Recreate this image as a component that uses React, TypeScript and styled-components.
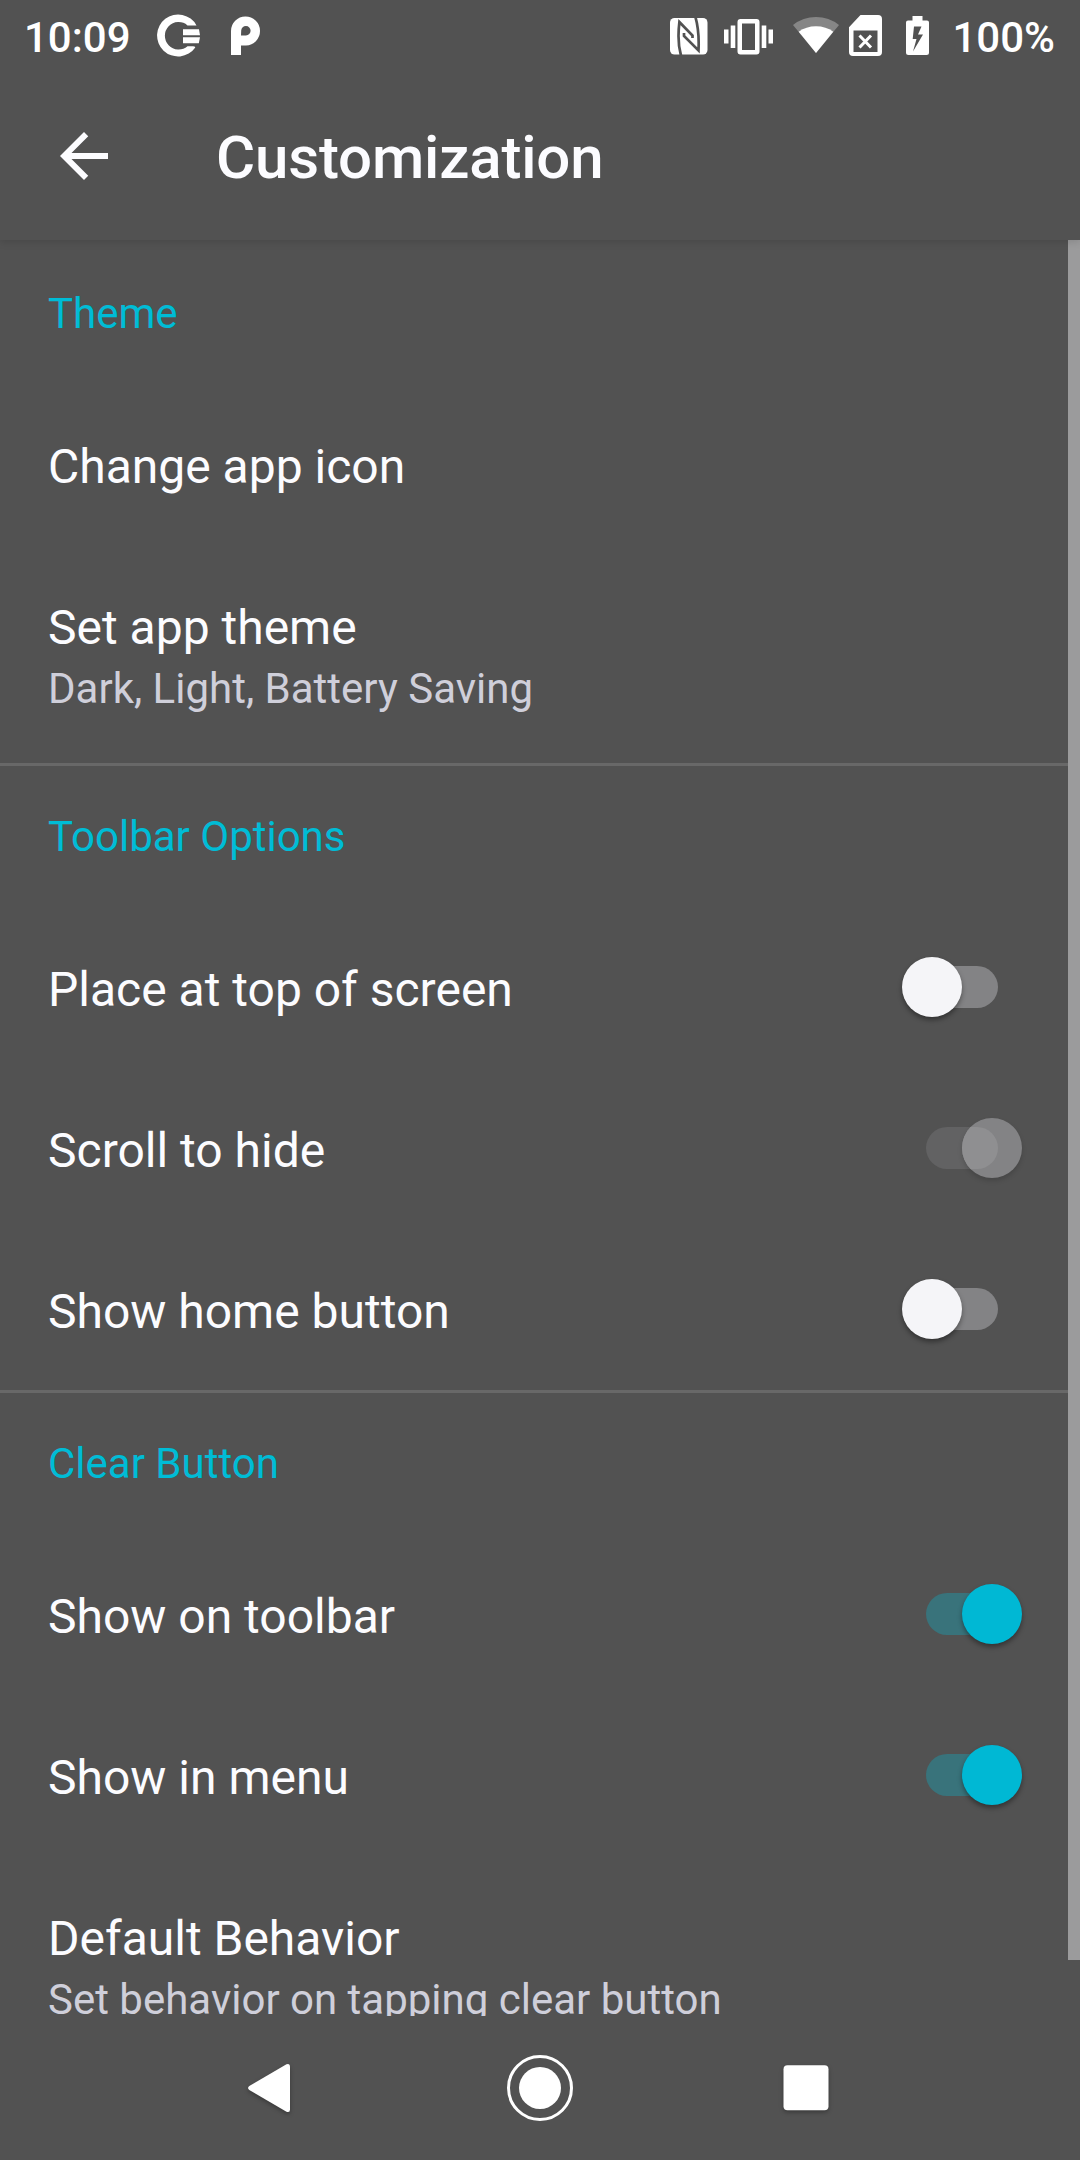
import React from "react";
import styled, { createGlobalStyle, css } from "styled-components";

const Global = createGlobalStyle`
  * { box-sizing: border-box; }
  html, body { margin: 0; padding: 0; background: #525252; }
`;

const Screen = styled.div`
  display: flex;
  flex-direction: column;
  width: 1080px;
  height: 2160px;
  overflow: hidden;
  background: #525252;
  color: #fcfcff;
  font-family: Roboto, "Noto Sans", sans-serif;
`;

const StatusBar = styled.header`
  display: flex;
  align-items: center;
  justify-content: space-between;
  flex: none;
  height: 72px;
  padding: 0 25px 0 24px;
  color: #fff;
`;

const StatusGroup = styled.div`
  display: flex;
  align-items: center;
  height: 72px;
`;

const StatusText = styled.span`
  font-size: 42px;
  font-weight: 500;
  line-height: 72px;
  white-space: nowrap;
  padding-top: 4px;
`;

const StatusIcon = styled.svg<{ $gap: number }>`
  display: block;
  flex: none;
  margin-left: ${(p) => p.$gap}px;
`;

const Toolbar = styled.div`
  display: flex;
  align-items: center;
  flex: none;
  height: 168px;
  padding-left: 48px;
  position: relative;
  z-index: 1;
  background: #525252;
  box-shadow: 0 2px 8px rgba(0, 0, 0, 0.13);
  clip-path: inset(0 0 -20px 0);
`;

const BackButton = styled.button`
  display: flex;
  width: 72px;
  height: 72px;
  padding: 0;
  border: 0;
  background: none;
  color: inherit;
`;

const PageTitle = styled.h1`
  margin: 0 0 0 96px;
  font-size: 60px;
  font-weight: 500;
  line-height: 70px;
  letter-spacing: -0.16px;
  padding-top: 4px;
`;

const Content = styled.main`
  flex: none;
  height: 1776px;
  overflow: hidden;
  position: relative;
`;

const ScrollThumb = styled.div`
  position: absolute;
  top: 0;
  right: 0;
  width: 12px;
  height: 1720px;
  background: #9b9b9c;
`;

const Group = styled.section`
  & + & > h2 {
    border-top: 3px solid #686868;
    padding-top: 46px;
  }
`;

const GroupTitle = styled.h2`
  margin: 0;
  height: 144px;
  padding: 49px 48px 0;
  font-size: 42px;
  font-weight: 400;
  line-height: 49px;
  color: #00bcd6;
`;

const Row = styled.div<{ $tall?: boolean }>`
  display: flex;
  align-items: flex-start;
  justify-content: space-between;
  height: ${(p) => (p.$tall ? 218 : 161)}px;
  padding: 0 58px 0 48px;
`;

const RowText = styled.div`
  display: flex;
  flex-direction: column;
  padding-top: 54px;
`;

const RowTitle = styled.div`
  font-size: 48px;
  line-height: 57px;
  white-space: nowrap;
`;

const RowSummary = styled.div`
  margin-top: 7px;
  font-size: 42px;
  line-height: 51px;
  color: #cfcfda;
  white-space: nowrap;
`;

type SwitchState = "on" | "off" | "disabled";

const trackColor = { on: "#39737b", off: "#838385", disabled: "#626263" };
const thumbColor = { on: "#00b8d4", off: "#f5f5f8", disabled: "#838385" };

const Switch = styled.div<{ $state: SwitchState }>`
  display: flex;
  flex: none;
  align-items: center;
  width: 120px;
  height: 60px;
  margin-top: 50px;
  position: relative;
  justify-content: ${(p) => (p.$state === "off" ? "flex-start" : "flex-end")};

  &::before {
    content: "";
    position: absolute;
    left: 24px;
    top: 9px;
    width: 72px;
    height: 42px;
    border-radius: 21px;
    background: ${(p) => trackColor[p.$state]};
  }
`;

const Thumb = styled.span<{ $state: SwitchState }>`
  position: relative;
  width: 60px;
  height: 60px;
  border-radius: 50%;
  overflow: hidden;
  background: ${(p) => thumbColor[p.$state]};
  box-shadow: 0 3px 5px rgba(0, 0, 0, ${(p) => (p.$state === "disabled" ? 0.15 : 0.38)});

  ${(p) =>
    p.$state === "disabled" &&
    css`
      &::after {
        content: "";
        position: absolute;
        right: 24px;
        top: 9px;
        width: 72px;
        height: 42px;
        border-radius: 21px;
        background: #8f8f91;
      }
    `}
`;

const NavBar = styled.nav`
  display: flex;
  flex: none;
  align-items: center;
  justify-content: center;
  gap: 186px;
  height: 144px;
`;

const NavIcon = styled.svg`
  display: block;
  overflow: visible;
  filter: drop-shadow(0 2px 2px rgba(0, 0, 0, 0.3));
`;

const HomeIcon = styled(NavIcon)`
  filter: none;
`;

interface Item {
  title: string;
  summary?: string;
  state?: SwitchState;
}

const groups: { title: string; items: Item[] }[] = [
  {
    title: "Theme",
    items: [
      { title: "Change app icon" },
      { title: "Set app theme", summary: "Dark, Light, Battery Saving" },
    ],
  },
  {
    title: "Toolbar Options",
    items: [
      { title: "Place at top of screen", state: "off" },
      { title: "Scroll to hide", state: "disabled" },
      { title: "Show home button", state: "off" },
    ],
  },
  {
    title: "Clear Button",
    items: [
      { title: "Show on toolbar", state: "on" },
      { title: "Show in menu", state: "on" },
      { title: "Default Behavior", summary: "Set behavior on tapping clear button" },
    ],
  },
];

function NotificationIcons() {
  return (
    <>
      <StatusIcon $gap={26} width="44" height="44" viewBox="0 0 44 44">
        <path
          d="M39.5 11.400A21 21 0 1 0 38.300 33.500Q38 32.200 36 32.200H30.500A13.700 13.700 0 1 1 30.500 11.400z"
          fill="#fff"
        />
        <path d="M26 15.200H42L43 21.200H26zM26 23.200H43L41.800 29.200H26z" fill="#fff" />
      </StatusIcon>
      <StatusIcon $gap={29} width="31" height="40" viewBox="0 0 31 40">
        <path
          fill="#fff"
          fillRule="evenodd"
          d="M1 38.500V15A14.500 14.500 0 1 1 16 29.500H11V38.500Q11 39 10.500 39H1.500Q1 39 1 38.500zM11 19.500H16A4.700 4.700 0 1 0 11.200 14.600z"
        />
      </StatusIcon>
    </>
  );
}

function SystemIcons() {
  return (
    <>
      <StatusIcon $gap={0} width="38" height="38" viewBox="0 -1 38 38">
        <rect width="37.500" height="36.500" rx="4.500" fill="#fff" />
        <path
          d="M11 37.500Q7 24 9.400 4L22.500 17.500V20M25.300 -1.500Q29.500 13 28.500 32.500L14 18V15"
          fill="none"
          stroke="#525252"
          strokeWidth="2.700"
        />
      </StatusIcon>
      <StatusIcon $gap={16} width="49" height="38" viewBox="0 0 49 38">
        <path
          fill="#fff"
          fillRule="evenodd"
          d="M0 12.500H4.500V26.500H0zM6.700 8.500H11.300V31H6.700zM37.700 8.500H42.300V31H37.700zM44.500 12.500H49V26.500H44.500zM16.500 2H32.500Q35.500 2 35.500 5V34.500Q35.500 37.500 32.500 37.500H16.500Q13.500 37.500 13.500 34.500V5Q13.500 2 16.500 2zM18 6.500V33H31V6.500z"
        />
      </StatusIcon>
      <StatusIcon $gap={20} width="46" height="38" viewBox="0 1 46 38">
        <path d="M23 37L0 9Q10 1 23 1T46 9z" fill="#868686" />
        <path d="M23 37L5.700 15.800Q13 10.300 23 10.300T40.300 15.800z" fill="#fff" />
      </StatusIcon>
      <StatusIcon $gap={10} width="33" height="42" viewBox="0 0 33 42">
        <path
          fill="#fff"
          fillRule="evenodd"
          d="M11.500 0H29Q33 0 33 4V37Q33 41 29 41H4Q0 41 0 37V12.200zM4.500 15.500V37H28.500V15.500z"
        />
        <path d="M10.500 20.500L22 32.500M22 20.500L10.500 32.500" stroke="#fff" strokeWidth="3" />
      </StatusIcon>
      <StatusIcon $gap={24} width="23" height="40" viewBox="0 0 23 40">
        <path
          fill="#fff"
          fillRule="evenodd"
          d="M6.500 0H16.500V4.500H21Q23 4.500 23 6.500V36.500Q23 39 20.500 39H2.500Q0 39 0 36.500V6.500Q0 4.500 2 4.500H6.500zM8 10.500L6.700 23H10.500L7 35.500L17 18.500H12L15.500 10.500z"
        />
      </StatusIcon>
    </>
  );
}

const PercentText = styled(StatusText)`
  margin-left: 23px;
`;

export default function App() {
  return (
    <Screen>
      <Global />
      <StatusBar>
        <StatusGroup>
          <StatusText>10:09</StatusText>
          <NotificationIcons />
        </StatusGroup>
        <StatusGroup>
          <SystemIcons />
          <PercentText>100%</PercentText>
        </StatusGroup>
      </StatusBar>

      <Toolbar>
        <BackButton aria-label="Back">
          <svg width="72" height="72" viewBox="0 0 24 24" fill="currentColor">
            <path d="M20 11H7.830l5.590-5.590L12 4l-8 8 8 8 1.410-1.410L7.830 13H20v-2z" />
          </svg>
        </BackButton>
        <PageTitle>Customization</PageTitle>
      </Toolbar>

      <Content>
        {groups.map((group) => (
          <Group key={group.title}>
            <GroupTitle>{group.title}</GroupTitle>
            {group.items.map((item) => (
              <Row key={item.title} $tall={Boolean(item.summary)}>
                <RowText>
                  <RowTitle>{item.title}</RowTitle>
                  {item.summary && <RowSummary>{item.summary}</RowSummary>}
                </RowText>
                {item.state && (
                  <Switch $state={item.state}>
                    <Thumb $state={item.state} />
                  </Switch>
                )}
              </Row>
            ))}
          </Group>
        ))}
        <ScrollThumb />
      </Content>

      <NavBar>
        <NavIcon width="84" height="66" viewBox="0 0 84 66">
          <path
            d="M49.500 9.300L12.300 31Q9.800 33 12.300 35L49.500 56.700Q53 58 53 54.500V11.500Q53 8 49.500 9.300z"
            fill="#fff"
          />
        </NavIcon>
        <HomeIcon width="66" height="66" viewBox="0 0 66 66">
          <circle cx="33" cy="33" r="31.500" fill="none" stroke="#fff" strokeWidth="3" />
          <circle cx="33" cy="33" r="21" fill="#fff" />
        </HomeIcon>
        <NavIcon width="84" height="66" viewBox="0 0 84 66">
          <rect x="24.500" y="10.300" width="45" height="45" rx="4" fill="#fff" />
        </NavIcon>
      </NavBar>
    </Screen>
  );
}
